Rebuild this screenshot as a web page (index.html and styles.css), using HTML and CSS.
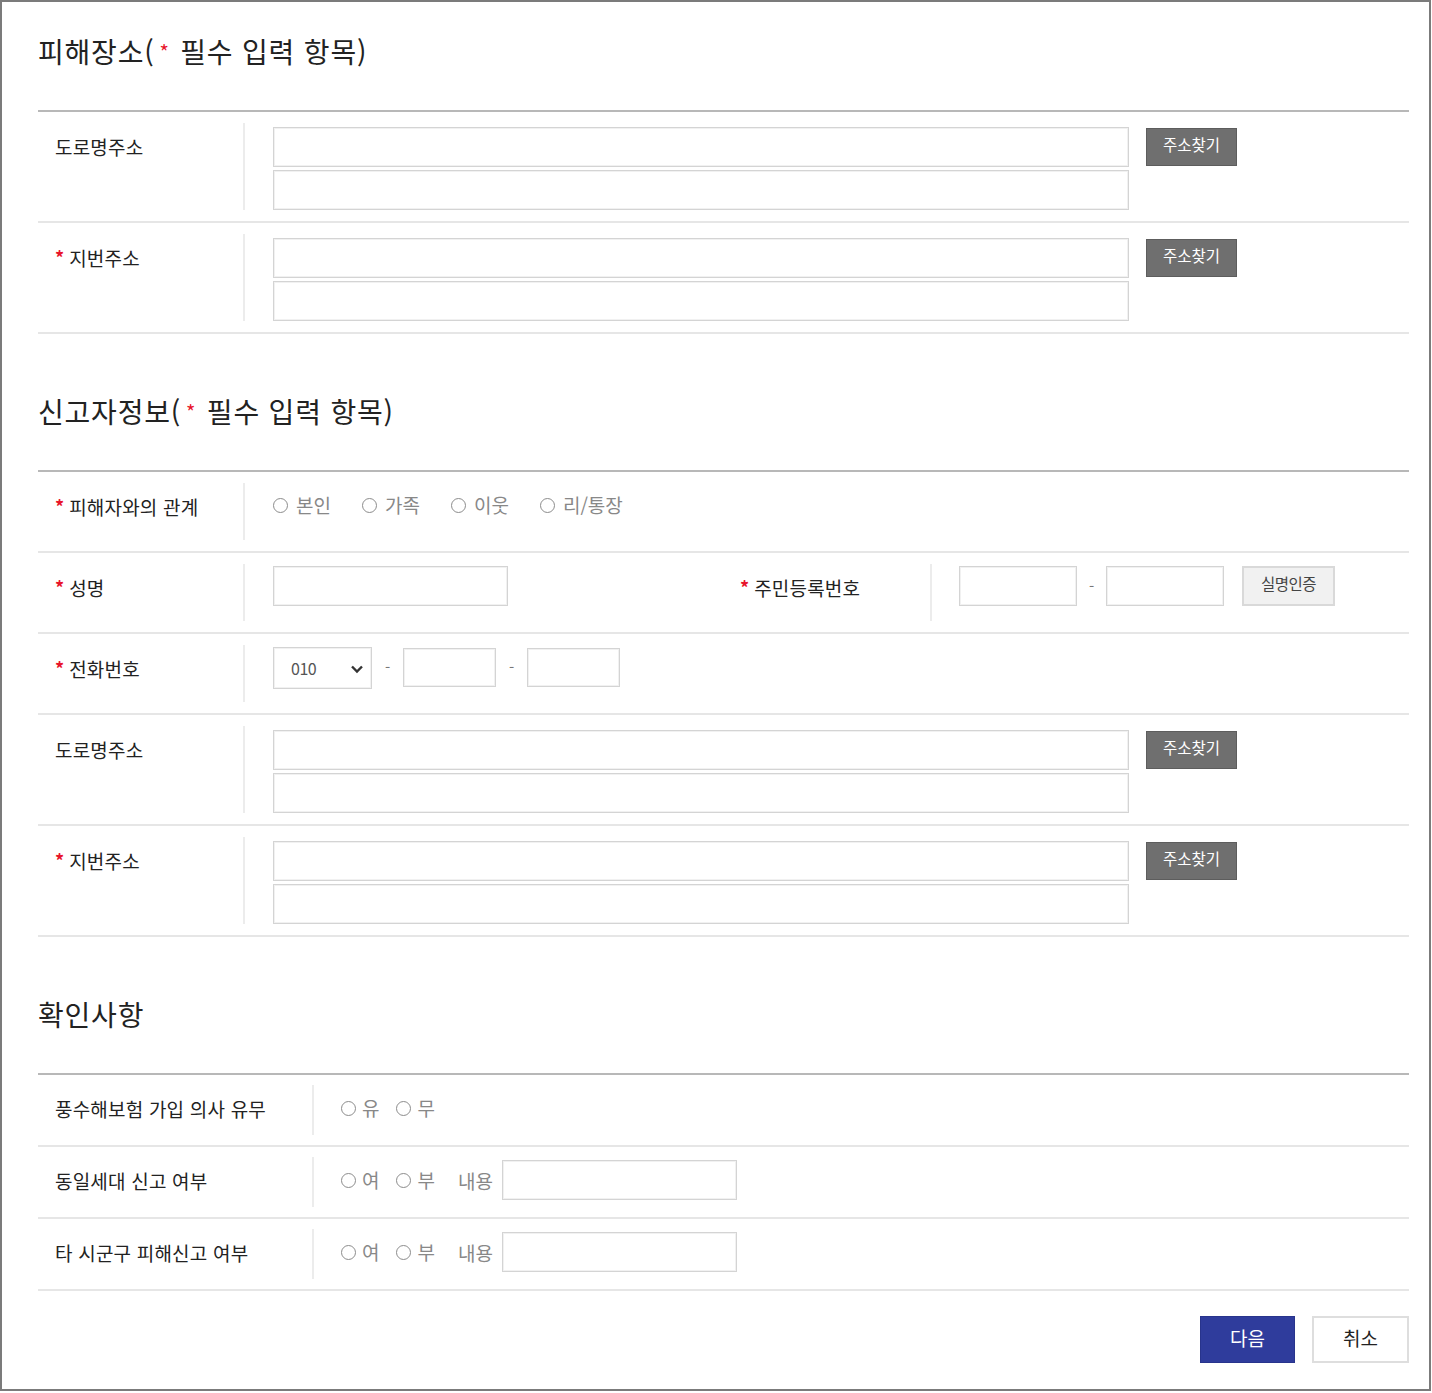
FILE: index.html
```html
<!DOCTYPE html>
<html lang="ko">
<head>
<meta charset="utf-8">
<title>피해신고</title>
<link rel="stylesheet" href="styles.css">
</head>
<body>
<div class="frame">
  <section class="sec">
    <h2 class="sec-title">피해장소(<span class="req-h">*</span> 필수 입력 항목)</h2>
    <div class="tbl">
      <div class="row tall">
        <div class="lbl">도로명주소</div>
        <div class="val">
          <div class="addr-inputs"><input class="inp addr" type="text"><input class="inp addr" type="text"></div>
          <button class="btn-find" type="button">주소찾기</button>
        </div>
      </div>
      <div class="row tall">
        <div class="lbl"><span class="req">*</span>지번주소</div>
        <div class="val">
          <div class="addr-inputs"><input class="inp addr" type="text"><input class="inp addr" type="text"></div>
          <button class="btn-find" type="button">주소찾기</button>
        </div>
      </div>
    </div>
  </section>

  <section class="sec">
    <h2 class="sec-title">신고자정보(<span class="req-h">*</span> 필수 입력 항목)</h2>
    <div class="tbl">
      <div class="row">
        <div class="lbl"><span class="req">*</span>피해자와의 관계</div>
        <div class="val radios">
          <label class="rd"><input type="radio" name="rel"><span>본인</span></label>
          <label class="rd"><input type="radio" name="rel"><span>가족</span></label>
          <label class="rd"><input type="radio" name="rel"><span>이웃</span></label>
          <label class="rd"><input type="radio" name="rel"><span>리/통장</span></label>
        </div>
      </div>
      <div class="row">
        <div class="lbl"><span class="req">*</span>성명</div>
        <div class="val half"><input class="inp name" type="text"></div>
        <div class="lbl lbl2"><span class="req">*</span>주민등록번호</div>
        <div class="val val2">
          <input class="inp rrn" type="text"><span class="dash">-</span><input class="inp rrn" type="text">
          <button class="btn-auth" type="button">실명인증</button>
        </div>
      </div>
      <div class="row">
        <div class="lbl"><span class="req">*</span>전화번호</div>
        <div class="val">
          <div class="sel"><span class="sel-txt">010</span>
            <svg class="chev" width="14" height="10" viewBox="0 0 14 10"><path d="M2 2.5 L7 7.5 L12 2.5" fill="none" stroke="#333" stroke-width="2.4"/></svg>
          </div>
          <span class="dash dash-ph">-</span><input class="inp tel" type="text"><span class="dash dash-ph">-</span><input class="inp tel" type="text">
        </div>
      </div>
      <div class="row tall">
        <div class="lbl">도로명주소</div>
        <div class="val">
          <div class="addr-inputs"><input class="inp addr" type="text"><input class="inp addr" type="text"></div>
          <button class="btn-find" type="button">주소찾기</button>
        </div>
      </div>
      <div class="row tall">
        <div class="lbl"><span class="req">*</span>지번주소</div>
        <div class="val">
          <div class="addr-inputs"><input class="inp addr" type="text"><input class="inp addr" type="text"></div>
          <button class="btn-find" type="button">주소찾기</button>
        </div>
      </div>
    </div>
  </section>

  <section class="sec">
    <h2 class="sec-title">확인사항</h2>
    <div class="tbl">
      <div class="row conf">
        <div class="lbl">풍수해보험 가입 의사 유무</div>
        <div class="val radios tight">
          <label class="rd"><input type="radio" name="ins"><span>유</span></label>
          <label class="rd"><input type="radio" name="ins"><span>무</span></label>
        </div>
      </div>
      <div class="row conf">
        <div class="lbl">동일세대 신고 여부</div>
        <div class="val radios tight">
          <label class="rd"><input type="radio" name="same"><span>여</span></label>
          <label class="rd"><input type="radio" name="same"><span>부</span></label>
          <span class="memo">내용</span><input class="inp memo-inp" type="text">
        </div>
      </div>
      <div class="row conf">
        <div class="lbl">타 시군구 피해신고 여부</div>
        <div class="val radios tight">
          <label class="rd"><input type="radio" name="other"><span>여</span></label>
          <label class="rd"><input type="radio" name="other"><span>부</span></label>
          <span class="memo">내용</span><input class="inp memo-inp" type="text">
        </div>
      </div>
    </div>
  </section>

  <div class="actions">
    <button class="btn-next" type="button">다음</button>
    <button class="btn-cancel" type="button">취소</button>
  </div>
</div>
</body>
</html>
```

FILE: styles.css
```css
* { box-sizing: border-box; }

body {
  margin: 0;
  background: #fff;
  font-family: "Noto Sans CJK KR", "Noto Sans", sans-serif;
  color: #222;
}

.frame {
  width: 1431px;
  height: 1391px;
  border: 2px solid #7b7b7b;
  padding: 31px 20px 0 36px;
}

.sec-title {
  margin: 0 0 41px;
  height: 36px;
  font-size: 28px;
  line-height: 36px;
  font-weight: 400;
  color: #222;
  letter-spacing: 0.8px;
  white-space: nowrap;
}

.sec + .sec .sec-title { margin-top: 59px; }

.req-h {
  display: inline-block;
  color: #e8142b;
  font-size: 20px;
  line-height: 20px;
  margin: 0 2px 0 5px;
  vertical-align: 3px;
}

.req {
  display: inline-block;
  color: #e8142b;
  font-size: 18px;
  line-height: 18px;
  font-weight: 700;
  margin-right: 5px;
  vertical-align: 1px;
  letter-spacing: 0;
}

.tbl { border-top: 2px solid #b8b8b8; }

.row {
  display: flex;
  min-height: 81px;
  border-bottom: 2px solid #e6e6e6;
}

.row.conf { min-height: 72px; }

.lbl {
  flex: 0 0 207px;
  margin: 11px 0;
  padding: 12px 0 0 17px;
  border-right: 2px solid #ececec;
  font-size: 19px;
  line-height: 24px;
  color: #222;
  letter-spacing: 0.2px;
  white-space: nowrap;
}

.conf .lbl {
  flex-basis: 276px;
  margin: 10px 0;
}

.val {
  flex: 1;
  display: flex;
  align-items: flex-start;
  padding: 13px 0 0 28px;
}

.tall .val { padding: 15px 0 11px 28px; }

.conf .val { padding-left: 27px; }

.val.half { flex: 0 0 478px; }

.lbl2 { flex-basis: 209px; }

.val2 { padding-left: 27px; }

.inp {
  display: block;
  height: 40px;
  margin: 0;
  border: 1px solid #d4d4d4;
  box-shadow: inset 0 0 0 1px #f1f1f1;
  background: #fff;
  font: inherit;
}

.addr-inputs {
  display: flex;
  flex-direction: column;
  gap: 3px;
}

.inp.addr { width: 856px; }
.inp.name { width: 235px; }
.inp.rrn { width: 118px; }
.inp.tel { width: 93px; height: 39px; margin-top: 1px; }
.inp.memo-inp { width: 235px; }

.btn-find {
  margin: 1px 0 0 17px;
  width: 91px;
  height: 38px;
  padding: 0 0 6px;
  background: #6f6f6f;
  border: 1px solid #5d5d5d;
  color: #fff;
  font-family: inherit;
  font-size: 15.5px;
  line-height: 20px;
}

.dash {
  width: 29px;
  text-align: center;
  line-height: 40px;
  color: #777;
  font-size: 15px;
}

.dash-ph { width: 31px; }

.btn-auth {
  margin-left: 18px;
  width: 93px;
  height: 40px;
  padding: 0 0 6px;
  background: #f1f1f1;
  border: 2px solid #d9d9d9;
  color: #444;
  font-family: inherit;
  font-size: 15.5px;
  letter-spacing: -0.5px;
}

.sel {
  width: 99px;
  height: 42px;
  border: 1px solid #d4d4d4;
  box-shadow: inset 0 0 0 1px #f1f1f1;
  display: flex;
  align-items: center;
  padding-left: 17px;
  position: relative;
}

.sel-txt {
  display: block;
  white-space: nowrap;
  color: #555;
  font-size: 16px;
  letter-spacing: -0.5px;
}

.chev {
  position: absolute;
  right: 7px;
  top: 16px;
}

.radios {
  align-items: center;
  height: 53px;
  padding-top: 13px;
  gap: 31px;
}

.radios.tight { gap: 17px; }

.rd {
  display: inline-flex;
  align-items: center;
  gap: 8px;
  color: #888;
  font-size: 19px;
  line-height: 24px;
}

.tight .rd { gap: 6px; }

.rd input {
  appearance: none;
  -webkit-appearance: none;
  width: 15px;
  height: 15px;
  margin: 1px 0 0;
  border: 1px solid #8c8c8c;
  border-radius: 50%;
  background: #fff;
}

.memo {
  margin-left: 6px;
  color: #888;
  font-size: 19px;
}

.memo-inp { margin-left: -8px; }

.actions {
  display: flex;
  justify-content: flex-end;
  gap: 17px;
  margin-top: 25px;
}

.btn-next,
.btn-cancel {
  height: 47px;
  padding: 0 0 4px;
  font-family: inherit;
  font-size: 19px;
}

.btn-next {
  width: 95px;
  background: #2f3c9c;
  border: 1px solid #28348c;
  color: #fff;
}

.btn-cancel {
  width: 97px;
  background: #fff;
  border: 2px solid #dedede;
  color: #222;
}
```
